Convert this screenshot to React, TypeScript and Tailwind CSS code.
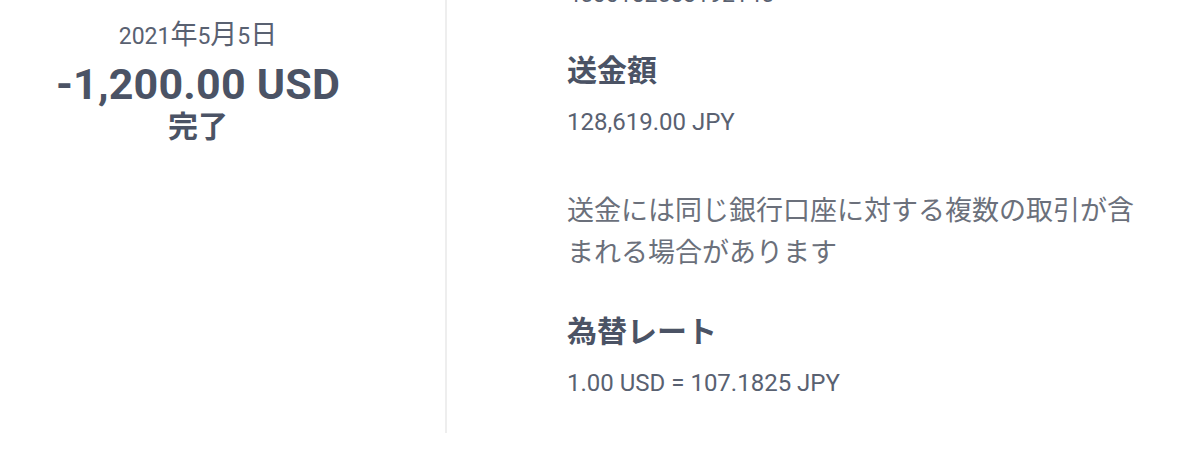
const fontStack = "font-['Roboto','Noto_Sans_CJK_JP',sans-serif]";

function Ja({ children }: { children: React.ReactNode }) {
  // kanji in the date line run a little larger than the digits
  return <span className="text-[27px]">{children}</span>;
}

function Field({ label, value, className = '' }: { label: string; value: string; className?: string }) {
  return (
    <div className={className}>
      <h3 className="text-[30px] leading-[36px] font-bold text-[#4b5365]">{label}</h3>
      <p className="mt-[19px] text-[24px] leading-[29px] text-[#596171]">{value}</p>
    </div>
  );
}

export default function App() {
  return (
    <div className={`flex h-[453px] w-[1200px] overflow-hidden bg-white ${fontStack}`}>
      {/* summary column */}
      <aside className="h-[433px] w-[447px] shrink-0 border-r-2 border-[#eeeeee]">
        <div className="flex w-[396px] flex-col items-center pt-[20px]">
          <p className="text-[23px] leading-[30px] text-[#596171]">
            2021<Ja>年</Ja>5<Ja>月</Ja>5<Ja>日</Ja>
          </p>
          <p className="mt-[9px] text-[43px] leading-[47px] font-bold tracking-[0.2px] text-[#4b5365]">-1,200.00 USD</p>
          <p className="mt-[1px] text-[30px] leading-[36px] font-bold text-[#4b5365]">完了</p>
        </div>
      </aside>

      {/* transfer details */}
      <section className="flex-1 pl-[120px]">
        <p className="mt-[-19px] text-[23px] leading-[28px] text-[#596171]">4500182583192145</p>
        <Field className="mt-[44px]" label="送金額" value="128,619.00 JPY" />
        <p className="mt-[53px] w-[590px] text-[27px] leading-[42px] text-[#6b707b]">
          送金には同じ銀行口座に対する複数の取引が含まれる場合があります
        </p>
        <Field className="mt-[40px]" label="為替レート" value="1.00 USD = 107.1825 JPY" />
      </section>
    </div>
  );
}
